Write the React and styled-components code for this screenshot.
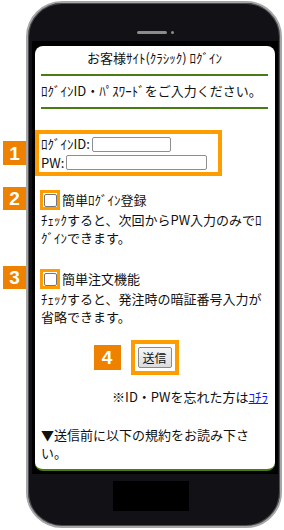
import React from "react";
import styled, { createGlobalStyle } from "styled-components";

const Global = createGlobalStyle`
  html, body { margin: 0; padding: 0; background: #fff; }
  body { font-family: "Noto Sans CJK JP", "Noto Sans", sans-serif; }
  * { box-sizing: border-box; }
`;

const Stage = styled.div`
  width: 284px;
  height: 530px;
  padding: 1px 0 0 26px;
  overflow: hidden;
  background: #fff;
`;

const Phone = styled.div`
  width: 256px;
  height: 527px;
  border: 2px solid #a6a6a6;
  border-radius: 36px;
  background: #111116;
  box-shadow: inset 0 0 0 1px #4c4c52;
  display: flex;
  flex-direction: column;
`;

const SpeakerRow = styled.div`
  display: flex;
  align-items: center;
  gap: 4px;
  height: 3px;
  margin: 28px 0 0 109px;
`;

const Speaker = styled.div`
  width: 30px;
  height: 3px;
  border-radius: 2px;
  background: #8c8c8c;
`;

const Camera = styled.div`
  width: 3px;
  height: 3px;
  border-radius: 50%;
  background: #8c8c8c;
`;

const Bezel = styled.div`
  width: 246px;
  margin: 7px 0 0 4px;
  padding: 5px 3px 3px;
  background: #000;
`;

const Screen = styled.div`
  height: 425px;
  background: #fff;
  border-radius: 8px;
  border-bottom: 2px solid #4b7b15;
  padding: 3px 7px 0 6px;
  color: #111;
  font-size: 13px;
  line-height: 18px;
  display: flex;
  flex-direction: column;
`;

const Title = styled.div`
  text-align: center;
  white-space: nowrap;
`;

const Rule = styled.div`
  height: 2px;
  background: #4b7b15;
  margin-top: ${(p) => p.$mt}px;
`;

const Text = styled.div`
  margin-top: ${(p) => p.$mt || 0}px;
  text-align: ${(p) => p.$align || "left"};
`;

const Highlight = styled.div`
  position: relative;
  border: 4px solid #ff9d00;
`;

const LoginBox = styled(Highlight)`
  width: 187px;
  margin: 21px 0 0 -6px;
  padding: 1px 0 0 2px;
`;

const Field = styled.div`
  display: flex;
  align-items: center;
  height: ${(p) => p.$h}px;
  white-space: nowrap;
`;

const TextInput = styled.input`
  width: ${(p) => p.$w}px;
  height: 15px;
  margin: 0 0 0 ${(p) => p.$ml}px;
  padding: 0 2px;
  border: 1px solid #8e8e8e;
  border-radius: 2px;
  background: #fff;
  font-size: 11px;
  outline: none;
`;

const Badge = styled.div`
  position: absolute;
  left: ${(p) => p.$left}px;
  top: ${(p) => p.$top}px;
  width: ${(p) => p.$w}px;
  height: ${(p) => p.$h}px;
  background: #ee8200;
  color: #fff;
  font: bold 19px/1 "Liberation Sans", Arial, sans-serif;
  display: flex;
  align-items: center;
  justify-content: center;
`;

const CheckRow = styled.div`
  display: flex;
  align-items: center;
  gap: 2px;
  height: 20px;
  margin-top: ${(p) => p.$mt}px;
`;

const CheckFrame = styled(Highlight)`
  width: 20px;
  height: 20px;
  border-width: 3px;
  margin-left: -1px;
  display: flex;
  align-items: center;
  justify-content: center;
`;

const Check = styled.input.attrs({ type: "checkbox" })`
  appearance: none;
  width: 13px;
  height: 13px;
  margin: 0;
  border: 1px solid #767676;
  border-radius: 2px;
  background: #fff;
`;

const SubmitBox = styled(Highlight)`
  align-self: center;
  margin-top: 14px;
  padding: 3px;
`;

const SubmitButton = styled.button`
  display: block;
  width: 34px;
  height: 21px;
  padding: 0;
  border: 1px solid #8a8a8a;
  border-radius: 2px;
  background: linear-gradient(#f7f7f7, #dcdcdc);
  color: #111;
  font-family: inherit;
  font-size: 12px;
  line-height: 19px;
`;

const Link = styled.a`
  color: #1414ff;
  text-decoration: underline;
`;

const HomeButton = styled.div`
  width: 76px;
  height: 30px;
  margin: 7px 0 0 85px;
  background: #000;
`;

export default function App() {
  return (
    <Stage>
      <Global />
      <Phone>
        <SpeakerRow>
          <Speaker />
          <Camera />
        </SpeakerRow>
        <Bezel>
          <Screen>
            <Title>お客様ｻｲﾄ(ｸﾗｼｯｸ) ﾛｸﾞｲﾝ</Title>
            <Rule $mt={7} />
            <Text $mt={6}>ﾛｸﾞｲﾝID・ﾊﾟｽﾜｰﾄﾞをご入力ください。</Text>
            <Rule $mt={7} />
            <LoginBox>
              <Badge $left={-36} $top={7} $w={23} $h={24}>1</Badge>
              <Field $h={18}>
                ﾛｸﾞｲﾝID:
                <TextInput $w={79} $ml={2} />
              </Field>
              <Field $h={19}>
                PW:
                <TextInput $w={141} $ml={2} />
              </Field>
            </LoginBox>
            <CheckRow $mt={14}>
              <CheckFrame>
                <Badge $left={-40} $top={-6} $w={23} $h={23}>2</Badge>
                <Check />
              </CheckFrame>
              簡単ﾛｸﾞｲﾝ登録
            </CheckRow>
            <Text $mt={1}>ﾁｪｯｸすると、次回からPW入力のみでﾛｸﾞｲﾝできます。</Text>
            <CheckRow $mt={22}>
              <CheckFrame>
                <Badge $left={-40} $top={-6} $w={23} $h={23}>3</Badge>
                <Check />
              </CheckFrame>
              簡単注文機能
            </CheckRow>
            <Text $mt={1}>ﾁｪｯｸすると、発注時の暗証番号入力が省略できます。</Text>
            <SubmitBox>
              <Badge $left={-41} $top={1} $w={27} $h={25}>4</Badge>
              <SubmitButton>送信</SubmitButton>
            </SubmitBox>
            <Text $mt={13} $align="right">
              ※ID・PWを忘れた方は<Link href="#">ｺﾁﾗ</Link>
            </Text>
            <Text $mt={20}>▼送信前に以下の規約をお読み下さい。</Text>
          </Screen>
        </Bezel>
        <HomeButton />
      </Phone>
    </Stage>
  );
}
